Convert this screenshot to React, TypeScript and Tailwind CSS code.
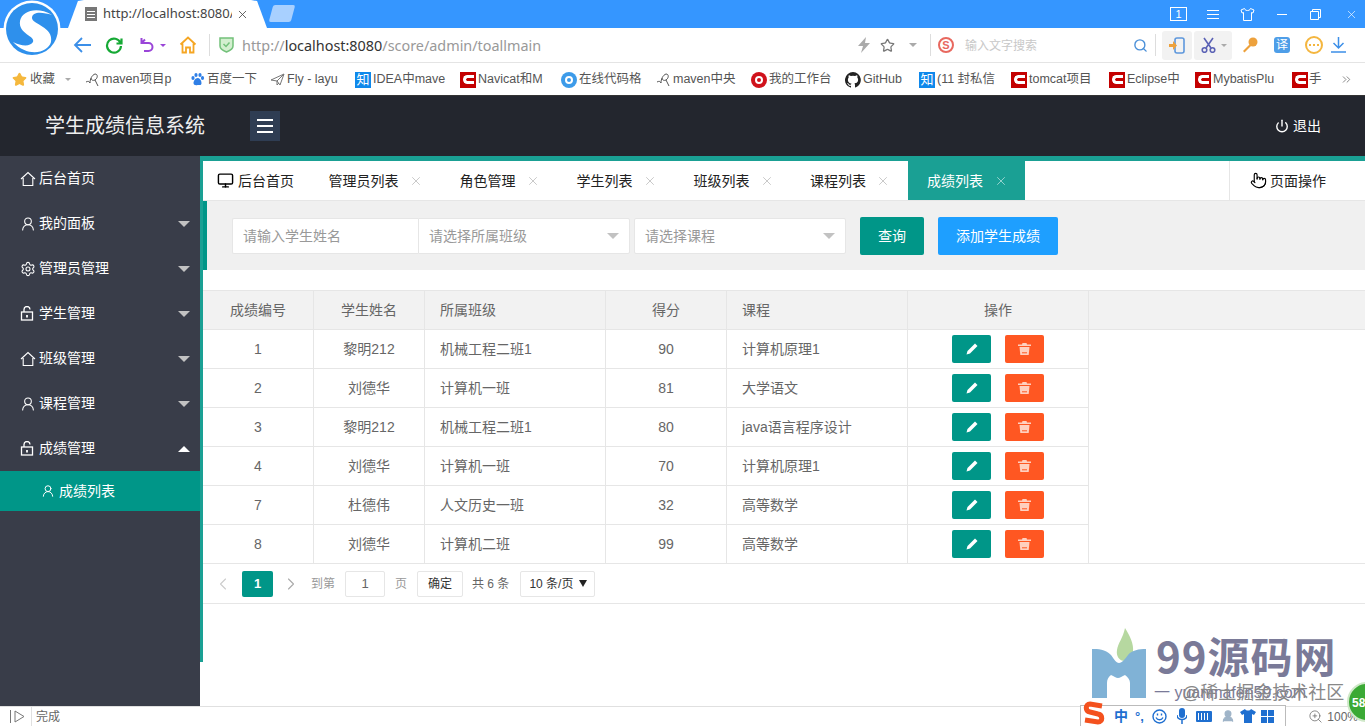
import {
  ChevronLeft,
  ChevronRight,
  ChevronsRight,
  Monitor,
  Pointer,
  Power,
  Search,
  Settings,
  Star,
  UserRound,
  X,
  ZoomIn,
} from "lucide-react";
import type { ReactNode } from "react";

const font = "font-['Liberation_Sans','Noto_Sans_CJK_SC',sans-serif]";

const HomeIcon = ({ size = 16 }: { size?: number }) => (
  <svg width={size} height={size} viewBox="0 0 16 16" fill="none" stroke="currentColor" strokeWidth="1.1">
    <path d="M1 8 8 1.500 15 8M3.200 7v7.500h9.600V7" />
  </svg>
);

const LockIcon = () => (
  <svg width="14" height="15" viewBox="0 0 14 15" fill="none" stroke="currentColor" strokeWidth="1.3">
    <rect x="1.500" y="6" width="11" height="8" />
    <path d="M4 6V3.500a3 3 0 0 1 6 0" />
    <path d="M7 9v2.500" strokeWidth="1.800" />
  </svg>
);

const TrashIcon = () => (
  <svg width="13" height="12" viewBox="0 0 13 12" fill="#ffd0bf">
    <path d="M4.500 0h4l.500 1.500H13v1.500H0V1.500h4z" />
    <path d="M1.500 4h10l-.800 8H2.300z" />
    <path d="M4 9.800h5" stroke="#ff5722" strokeWidth="1" />
  </svg>
);

const PencilIcon = () => (
  <svg width="12" height="12" viewBox="0 0 12 12" fill="white">
    <path d="M9 .5 11.500 3 4 10.500 0.500 11.500 1.500 8z" />
  </svg>
);

const Caret = ({ up = false, className = "" }: { up?: boolean; className?: string }) => (
  <span
    className={`block w-0 h-0 border-x-[6px] border-x-transparent ${
      up ? "border-b-[6px] border-b-white" : "border-t-[6px] border-t-[#c2c2c2]"
    } ${className}`}
  />
);

const RedC = () => (
  <span className="w-4 h-4 bg-[#c40000] flex items-center justify-center shrink-0">
    <span className="w-[11px] h-[9px] rounded-l-full border-[3px] border-r-0 border-white" />
  </span>
);

const Zhi = () => (
  <span className="w-4 h-4 bg-[#0f88eb] text-white text-[13px] leading-4 text-center shrink-0">知</span>
);

const MavenMark = () => (
  <svg width="15" height="15" viewBox="0 0 15 15" fill="none" stroke="#555" strokeWidth="1" className="shrink-0">
    <path d="M1 10c2-1 3-1 4 1 0-4 2-8 5-9 3 0 3 4 0 6-2 1-4 0-4-2M10 8l3 6" />
  </svg>
);

const bookmarks: { w: number; icon: ReactNode; label: string }[] = [
  { w: 105, icon: <MavenMark />, label: "maven项目p" },
  {
    w: 80,
    icon: (
      <svg width="15" height="15" viewBox="0 0 15 15" fill="#2f7fe6" className="shrink-0">
        <ellipse cx="3" cy="6" rx="1.600" ry="2" />
        <ellipse cx="6" cy="3" rx="1.600" ry="2" />
        <ellipse cx="10" cy="3" rx="1.600" ry="2" />
        <ellipse cx="12.500" cy="6" rx="1.600" ry="2" />
        <path d="M7.500 6c-2 0-4 3-4 5s2 2.500 4 2 4 1 4-2-2-5-4-5z" />
      </svg>
    ),
    label: "百度一下",
  },
  {
    w: 85,
    icon: (
      <svg width="15" height="15" viewBox="0 0 15 15" fill="none" stroke="#777" strokeWidth="1" className="shrink-0">
        <path d="M1 8 14 2 10 13 7 9zM7 9l7-7M7 9v4l2-2" />
      </svg>
    ),
    label: "Fly - layu",
  },
  { w: 105, icon: <Zhi />, label: "IDEA中mave" },
  { w: 101, icon: <RedC />, label: "Navicat和M" },
  {
    w: 95,
    icon: (
      <span className="w-4 h-4 rounded-full bg-[#3d9be9] flex items-center justify-center shrink-0">
        <span className="w-2 h-2 rounded-full border-2 border-white" />
      </span>
    ),
    label: "在线代码格",
  },
  { w: 95, icon: <MavenMark />, label: "maven中央" },
  {
    w: 94,
    icon: (
      <span className="w-4 h-4 rounded-full bg-[#d0121b] flex items-center justify-center shrink-0">
        <span className="w-2 h-2 rounded-full border-2 border-white" />
      </span>
    ),
    label: "我的工作台",
  },
  {
    w: 74,
    icon: (
      <svg width="16" height="16" viewBox="0 0 16 16" fill="#222" className="shrink-0">
        <path d="M8 0a8 8 0 0 0-2.500 15.600c.4.100.500-.200.500-.400v-1.400c-2.200.500-2.700-1-2.700-1-.4-.900-.900-1.200-.900-1.200-.700-.500.100-.500.100-.500.800.100 1.200.800 1.200.800.700 1.200 1.900.900 2.300.700.100-.500.300-.900.500-1.100-1.800-.200-3.600-.900-3.600-4 0-.900.300-1.600.800-2.100-.100-.200-.400-1 .100-2.100 0 0 .700-.200 2.200.800a7.500 7.500 0 0 1 4 0c1.500-1 2.200-.800 2.200-.800.400 1.100.200 1.900.100 2.100.500.600.800 1.300.800 2.100 0 3.100-1.900 3.700-3.700 3.900.3.300.600.800.600 1.500v2.200c0 .2.100.500.600.400A8 8 0 0 0 8 0z" />
      </svg>
    ),
    label: "GitHub",
  },
  { w: 92, icon: <Zhi />, label: "(11 封私信" },
  { w: 98, icon: <RedC />, label: "tomcat项目" },
  { w: 86, icon: <RedC />, label: "Eclipse中" },
  { w: 97, icon: <RedC />, label: "MybatisPlu" },
];

const menu = [
  { icon: <HomeIcon />, label: "后台首页", caret: false },
  { icon: <UserRound size={16} strokeWidth={1.6} />, label: "我的面板", caret: true },
  { icon: <Settings size={16} strokeWidth={1.6} />, label: "管理员管理", caret: true },
  { icon: <LockIcon />, label: "学生管理", caret: true },
  { icon: <HomeIcon />, label: "班级管理", caret: true },
  { icon: <UserRound size={16} strokeWidth={1.6} />, label: "课程管理", caret: true },
];

const tabs = [
  { label: "管理员列表", w: "w-[131px]" },
  { label: "角色管理", w: "w-[117px]" },
  { label: "学生列表", w: "w-[117px]" },
  { label: "班级列表", w: "w-[117px]" },
  { label: "课程列表", w: "w-[116px]" },
];

const rows = [
  ["1", "黎明212", "机械工程二班1", "90", "计算机原理1"],
  ["2", "刘德华", "计算机一班", "81", "大学语文"],
  ["3", "黎明212", "机械工程二班1", "80", "java语言程序设计"],
  ["4", "刘德华", "计算机一班", "70", "计算机原理1"],
  ["7", "杜德伟", "人文历史一班", "32", "高等数学"],
  ["8", "刘德华", "计算机二班", "99", "高等数学"],
];

const columns = "grid grid-cols-[111px_111px_181px_121px_181px_181px] w-[886px]";

const BrowserChrome = () => (
  <div className="shrink-0">
    <div className="h-7 bg-[#3596ff] flex items-end relative">
      <div className="ml-[68px] w-[199px] h-7 bg-white [clip-path:polygon(0_100%,5%_4%,8%_0,92%_0,95%_4%,100%_100%)] flex items-center pl-[17px] text-[13px] text-[#444] font-['Noto_Sans',sans-serif]">
        <span className="w-3 h-[14px] bg-[#777] mr-[6px] flex flex-col justify-center gap-[2px] px-[2px] shrink-0">
          <span className="h-px bg-white" />
          <span className="h-px bg-white" />
          <span className="h-px bg-white" />
        </span>
        <span className="w-[129px] overflow-hidden whitespace-nowrap">http://localhost:8080/s</span>
        <X size={13} className="ml-[4px]" strokeWidth={1.5} />
      </div>
      <span className="ml-[4px] mb-[6px] w-[22px] h-[17px] bg-[#a8d0ff] -skew-x-[15deg] rounded-[2px]" />
      <div className="ml-auto flex items-center text-white h-7">
        <span className="w-[17px] h-[14px] border border-white text-[11px] leading-[12px] text-center mr-5">1</span>
        <span className="w-3 flex flex-col gap-[3px] mr-[21px]">
          <span className="h-px bg-white" />
          <span className="h-px bg-white" />
          <span className="h-px bg-white" />
        </span>
        <svg width="15" height="13" viewBox="0 0 15 13" fill="none" stroke="white" className="mr-[22px]">
          <path d="M4.500.5 1 2l1 3 1.500-.500v8h8v-8L13 5l1-3L10.500.5c-.5 2-2.500 2-3 2s-2.500 0-3-2z" />
        </svg>
        <span className="w-[10px] h-px bg-white mr-[23px]" />
        <svg width="11" height="11" viewBox="0 0 11 11" fill="none" stroke="white" className="mr-6">
          <path d="M.5 2.500h8v8h-8zM2.500 2.500v-2h8v8h-2" />
        </svg>
        <X size={13} strokeWidth={1.2} className="mr-[7px]" />
      </div>
    </div>

    <div className="h-[34px] bg-white flex items-center relative">
      <svg width="20" height="18" viewBox="0 0 20 18" fill="none" stroke="#3c8fe8" strokeWidth="1.8" className="ml-[73px]">
        <path d="M18 9H2M9 2 2 9l7 7" />
      </svg>
      <svg width="18" height="18" viewBox="0 0 18 18" fill="none" stroke="#16a935" strokeWidth="2.200" className="ml-[12px]">
        <path d="M15.500 7A7 7 0 1 0 16 10M16.500 2.500V7.500H11.500" />
      </svg>
      <svg width="16" height="16" viewBox="0 0 16 16" fill="none" stroke="#9a45d8" strokeWidth="2" className="ml-[17px]">
        <path d="M1.500 1v5h7a4 4 0 0 1 0 8H4M1.500 6 5 2.500" />
      </svg>
      <span className="ml-1 w-0 h-0 border-x-[3px] border-x-transparent border-t-[3px] border-t-[#9a45d8]" />
      <svg width="18" height="18" viewBox="0 0 18 18" fill="none" stroke="#f5a623" strokeWidth="1.800" className="ml-[13px]">
        <path d="M1.500 8.500 9 1.500l7.500 7M3.500 7.500v9h3.500v-5h4v5h3.500v-9" />
      </svg>
      <span className="ml-3 w-px h-[22px] bg-[#ddd]" />
      <svg width="15" height="16" viewBox="0 0 15 16" fill="#d3efcf" stroke="#73c17a" strokeWidth="1.500" className="ml-[9px]">
        <path d="M1 1h13v8c0 3-4 5-6.500 6C5 14 1 12 1 9z" />
        <path d="M4.500 7 7 9.500 10.500 5.500" fill="none" />
      </svg>
      <span className="ml-2 mt-[1px] text-[14.400px] text-[#999] font-['Noto_Sans',sans-serif] w-[310px] whitespace-nowrap">
        http://<span className="text-[#333]">localhost:8080</span>/score/admin/toallmain
      </span>
      <svg width="12" height="16" viewBox="0 0 12 16" fill="#aaa" className="ml-[306px]">
        <path d="M8 0 0 9h5l-2 7 9-10H7z" />
      </svg>
      <Star size={15} className="ml-[10px] text-[#777]" strokeWidth={2} />
      <span className="ml-[14px] w-0 h-0 border-x-[4px] border-x-transparent border-t-[4px] border-t-[#aaa]" />
      <span className="ml-[13px] w-px h-[22px] bg-[#ddd]" />
      <span className="ml-[7px] w-4 h-4 rounded-full border-2 border-[#e8685f] text-[#e8685f] text-[11px] font-bold leading-3 text-center">
        S
      </span>
      <span className="ml-[11px] mt-[1px] text-[12px] text-[#c8c8c8] w-[169px]">输入文字搜索</span>
      <Search size={15} className="text-[#4a8fd8] -ml-[1px]" strokeWidth={2.2} />
      <span className="ml-[7px] w-px h-[22px] bg-[#ddd]" />
      <span className="ml-[6px] w-[30px] h-[29px] bg-[#f2f2f2] rounded-[3px] flex items-center justify-center">
        <svg width="18" height="17" viewBox="0 0 18 17" fill="none">
          <rect x="7" y="1" width="9" height="15" rx="2" stroke="#5d97dc" strokeWidth="1.600" />
          <path d="M1 7h4V4l4 4.500L5 13v-3H1z" fill="#eda13c" />
        </svg>
      </span>
      <span className="ml-[2px] w-[38px] h-[29px] bg-[#f2f2f2] rounded-[3px] flex items-center pl-[7px]">
        <svg width="15" height="16" viewBox="0 0 15 16" fill="none" stroke="#5b62b5" strokeWidth="1.600">
          <path d="M3 1l7 10M12 1 5 11" />
          <circle cx="3.500" cy="13" r="2.300" />
          <circle cx="11.500" cy="13" r="2.300" />
        </svg>
        <span className="ml-[5px] w-0 h-0 border-x-[3px] border-x-transparent border-t-[3px] border-t-[#aaa]" />
      </span>
      <svg width="16" height="16" viewBox="0 0 16 16" fill="#eda13c" className="ml-[10px]">
        <circle cx="11" cy="5" r="4.500" />
        <path d="M8 7 1 14l1.500 1.500L9 9z" />
      </svg>
      <span className="ml-4 w-4 h-4 bg-[#4e9ee8] rounded-[3px] text-white text-[12px] leading-4 text-center">译</span>
      <span className="ml-[15px] w-[18px] h-[18px] rounded-full border-2 border-[#f4b63f] flex items-center justify-center gap-[2px]">
        <span className="w-[2px] h-[2px] bg-[#f4b63f]" />
        <span className="w-[2px] h-[2px] bg-[#f4b63f]" />
        <span className="w-[2px] h-[2px] bg-[#f4b63f]" />
      </span>
      <svg width="15" height="16" viewBox="0 0 15 16" fill="none" stroke="#3c8fe8" strokeWidth="1.500" className="ml-[8px]">
        <path d="M7.500 0v11M2.500 6l5 5 5-5M0 15h15" />
      </svg>
    </div>

    <div className="h-[33px] bg-white border-t border-[#e4e4e4] flex items-center pl-[12px] pt-[1px] text-[12.500px] text-[#555] whitespace-nowrap overflow-hidden">
      <div className="w-[73px] flex items-center">
        <Star size={15} className="text-[#f5b83d] shrink-0" fill="#f5b83d" />
        <span className="ml-[3px]">收藏</span>
        <span className="ml-[10px] w-0 h-0 border-x-[3px] border-x-transparent border-t-[3px] border-t-[#aaa]" />
      </div>
      {bookmarks.map((b) => (
        <div key={b.label} className="flex items-center gap-[1px] shrink-0" style={{ width: b.w }}>
          {b.icon}
          <span className="ml-[1px]">{b.label}</span>
        </div>
      ))}
      <div className="flex items-center w-[48px] shrink-0">
        <RedC />
        <span className="ml-[1px] w-[14px] overflow-hidden">手</span>
      </div>
      <ChevronsRight size={13} strokeWidth={1.4} className="text-[#666]" />
    </div>
    <div className="h-px bg-[#333]" />
  </div>
);

const Header = () => (
  <header className="h-[60px] shrink-0 bg-[#23262e] flex items-center pl-[45px] pr-[44px] text-white">
    <span className="text-[20px] w-[205px] text-[#eee]">学生成绩信息系统</span>
    <span className="w-[30px] h-[30px] bg-[#2f3d53] flex flex-col justify-center gap-[4px] px-[7px]">
      <span className="h-[2px] bg-white" />
      <span className="h-[2px] bg-white" />
      <span className="h-[2px] bg-white" />
    </span>
    <span className="ml-auto flex items-center gap-[4px] text-[14px]">
      <Power size={14} strokeWidth={2.4} />
      退出
    </span>
  </header>
);

const Sidebar = () => (
  <aside className="w-[200px] shrink-0 bg-[#393d49] text-[14px] text-white">
    {menu.map((item) => (
      <div key={item.label} className="h-[45px] flex items-center pl-[20px] pr-[10px]">
        <span className="w-[19px] flex">{item.icon}</span>
        <span>{item.label}</span>
        {item.caret && <Caret className="ml-auto mt-[1px]" />}
      </div>
    ))}
    <div className="h-[45px] flex items-center pl-[20px] pr-[10px]">
      <span className="w-[19px] flex">
        <LockIcon />
      </span>
      <span>成绩管理</span>
      <Caret up className="ml-auto" />
    </div>
    <div className="h-10 bg-[#009688] flex items-center pl-[41px]">
      <UserRound size={14} strokeWidth={1.7} className="mr-[4px]" />
      成绩列表
    </div>
  </aside>
);

const Tabs = () => (
  <div className="h-10 flex bg-white text-[14px] text-[#222] border-b border-[#e6e6e6]">
    <div className="w-[107px] flex items-center pl-[14px]">
      <Monitor size={17} strokeWidth={2} className="mr-[4px] text-black" />
      <span className="pt-[1px]">后台首页</span>
    </div>
    {tabs.map((t) => (
      <div key={t.label} className={`${t.w} flex items-center justify-center gap-[10px]`}>
        <span className="pt-[1px]">{t.label}</span>
        <X size={14} strokeWidth={1.1} className="text-[#aaa]" />
      </div>
    ))}
    <div className="w-[117px] bg-[#1aa094] text-white flex items-center justify-center gap-[11px] pl-[2px]">
      <span className="pt-[1px]">成绩列表</span>
      <X size={14} strokeWidth={1.1} className="text-[#d6eeec]" />
    </div>
    <div className="ml-auto w-[136px] border-l border-[#e6e6e6] flex items-center pl-[20px]">
      <Pointer size={17} strokeWidth={1.6} className="mr-[3px] text-black" />
      <span className="pt-[1px]">页面操作</span>
    </div>
  </div>
);

const Filters = () => (
  <div className="h-[69px] bg-[#f0f0f0] border-l-4 border-[#009688] flex items-center pl-[25px] text-[14px] text-[#999]">
    <div className="w-[186px] h-9 bg-white rounded-l-[2px] flex items-center pl-[10px] pt-[1px] border border-r-0 border-[#e6e6e6]">
      请输入学生姓名
    </div>
    <div className="w-[212px] h-9 bg-white rounded-r-[2px] flex items-center px-[10px] pt-[1px] border border-[#e6e6e6]">
      请选择所属班级
      <Caret className="ml-auto" />
    </div>
    <div className="ml-[4px] w-[212px] h-9 bg-white rounded-[2px] flex items-center px-[10px] pt-[1px] border border-[#e6e6e6]">
      请选择课程
      <Caret className="ml-auto" />
    </div>
    <button className="ml-[14px] w-[64px] h-[38px] pt-[1px] rounded-[2px] bg-[#009688] text-white">查询</button>
    <button className="ml-[14px] w-[120px] h-[38px] pt-[1px] rounded-[2px] bg-[#1e9fff] text-white">添加学生成绩</button>
  </div>
);

const Table = () => (
  <div className="mt-5 text-[14px] text-[#666]">
    <div className="h-10 bg-[#f2f2f2] border-y border-[#e6e6e6]">
      <div className={`${columns} h-full`}>
        {["成绩编号", "学生姓名", "所属班级", "得分", "课程", "操作"].map((h, i) => (
          <div
            key={h}
            className={`flex items-center border-r border-[#e6e6e6] ${
              i === 2 || i === 4 ? "pl-[15px]" : "justify-center"
            }`}
          >
            {h}
          </div>
        ))}
      </div>
    </div>
    {rows.map((r, idx) => (
      <div
        key={r[0]}
        className={`${columns} ${idx === rows.length - 1 ? "h-[38px]" : "h-[39px] border-b border-[#e6e6e6]"}`}
      >
        {r.map((c, i) => (
          <div
            key={i}
            className={`flex items-center border-r border-[#e6e6e6] ${
              i === 2 || i === 4 ? "pl-[15px]" : "justify-center"
            }`}
          >
            {c}
          </div>
        ))}
        <div className="flex items-center justify-center gap-[14px] border-r border-[#e6e6e6]">
          <span className="w-[39px] h-7 bg-[#009688] rounded-[2px] flex items-center justify-center">
            <PencilIcon />
          </span>
          <span className="w-[39px] h-7 bg-[#ff5722] rounded-[2px] flex items-center justify-center">
            <TrashIcon />
          </span>
        </div>
      </div>
    ))}
  </div>
);

const Pagination = () => (
  <div className="h-[41px] border-y border-[#e6e6e6] flex items-center pl-[10px] text-[12px] text-[#999]">
    <ChevronLeft size={20} strokeWidth={1.300} className="text-[#ccc]" />
    <span className="ml-[9px] w-[31px] h-[26px] bg-[#009688] rounded-[2px] text-white font-bold text-[13px] flex items-center justify-center">
      1
    </span>
    <ChevronRight size={20} strokeWidth={1.300} className="ml-[8px] text-[#aaa]" />
    <span className="ml-[10px]">到第</span>
    <span className="ml-[10px] w-10 h-[26px] border border-[#e6e6e6] rounded-[2px] text-[#666] text-[13px] flex items-center justify-center">
      1
    </span>
    <span className="ml-[10px]">页</span>
    <span className="ml-[10px] w-[46px] h-[26px] border border-[#e6e6e6] rounded-[2px] text-[#333] flex items-center justify-center">
      确定
    </span>
    <span className="ml-[9px] text-[#666]">共 6 条</span>
    <span className="ml-[11px] w-[75px] h-[26px] border border-[#e6e6e6] rounded-[2px] text-[#333] flex items-center pl-2">
      10 条/页
      <span className="ml-auto mr-[7px] w-0 h-0 border-x-[4px] border-x-transparent border-t-[7px] border-t-[#222]" />
    </span>
  </div>
);

const Overlays = () => (
  <>
    {/* browser logo */}
    <svg width="58" height="58" viewBox="0 0 58 58" className="absolute left-[3px] top-0">
      <circle cx="29" cy="29" r="28.500" fill="white" />
      <circle cx="29" cy="29" r="26" fill="#2e90ec" />
      <path
        d="M10 42c8 4 17 5 20 0 3-6-15-8-13-21 2-10 17-15 32-6-9-3-20-4-20 3 0 6 22 9 19 24-3 11-23 16-38 0z"
        fill="white"
      />
    </svg>

    {/* watermark */}
    <div className="absolute left-[1092px] top-[628px] w-[273px] h-[98px] pointer-events-none">
      <svg width="54" height="70" viewBox="0 0 54 70">
        <path d="M33 0c5 8 9 16 8 24-1 6-5 9-8 9-6 0-9-5-8-11 1-7 6-12 8-22z" fill="#b6d8a0" />
        <path d="M0 21c6 0 13 0 19 6 3 4 5 8 8 8s6-4 9-8c4-5 11-6 18-6v49H38V55c0-3-2-6-5-8-3 1-5 3-7 3-2 0-4-2-7-3-3 2-4 5-4 8v15H0z" fill="#80b2d6" />
      </svg>
      <span className="absolute left-[64px] top-[3px] text-[42px] leading-[48px] font-bold text-[#7a7a98] font-['Noto_Sans_CJK_SC',sans-serif] whitespace-nowrap tracking-[1px]">
        99源码网
      </span>
      <span className="absolute left-[62px] top-[55px] text-[16px] leading-5 text-[#7a7a98] whitespace-nowrap">
        一 yuanmafen59.com
      </span>
      <span className="absolute left-[90px] top-[55px] text-[18px] leading-5 text-[#888] whitespace-nowrap">
        @稀土掘金技术社区
      </span>
    </div>

    {/* IME bar */}
    <div className="absolute left-[1080px] top-[705px] w-[206px] h-[21px] bg-white border border-b-0 border-[#bbb] flex items-center pl-[1px] text-[#1f6fd0]">
      <svg width="24" height="24" viewBox="0 0 24 24" fill="none" stroke="#f4511e" strokeWidth="5" className="-mt-[6px]">
        <path d="M20 5 8 3C3 3 3 10 8 11l8 2c5 1 5 8 0 8L3 19" />
      </svg>
      <span className="ml-[8px] text-[14px] font-bold">中</span>
      <span className="ml-[7px] text-[13px] font-bold leading-none">°,</span>
      <svg width="15" height="15" viewBox="0 0 15 15" fill="none" stroke="#1f6fd0" strokeWidth="1.400" className="ml-[8px]">
        <circle cx="7.500" cy="7.500" r="6.500" />
        <path d="M4 8.500c1.500 3 5.500 3 7 0M5.500 4.500v2M9.500 4.500v2" />
      </svg>
      <svg width="10" height="16" viewBox="0 0 10 16" fill="#1f6fd0" className="ml-[10px]">
        <rect x="2" y="0" width="6" height="10" rx="3" />
        <path d="M0 7c0 6 10 6 10 0M5 12v4" fill="none" stroke="#1f6fd0" strokeWidth="1.500" />
      </svg>
      <span className="ml-[9px] w-[16px] h-[11px] bg-[#1f6fd0] rounded-[1px] border-2 border-[#1f6fd0] [background-image:repeating-linear-gradient(90deg,white_0,white_1px,transparent_1px,transparent_3px)]" />
      <UserRound size={14} className="ml-[9px] text-[#9fb4c8]" fill="#9fb4c8" />
      <svg width="16" height="14" viewBox="0 0 16 14" fill="#1f6fd0" className="ml-[5px]">
        <path d="M5 0 0 3l2 3 2-1v9h8V5l2 1 2-3-5-3c-1 2-5 2-6 0z" />
      </svg>
      <span className="ml-[5px] grid grid-cols-2 gap-[1px]">
        <span className="w-[6px] h-[6px] bg-[#1f6fd0]" />
        <span className="w-[6px] h-[6px] bg-[#1f6fd0]" />
        <span className="w-[6px] h-[6px] bg-[#1f6fd0]" />
        <span className="w-[6px] h-[6px] bg-[#1f6fd0]" />
      </span>
    </div>

    {/* speed ball */}
    <div className="absolute left-[1347px] top-[682px] w-[40px] h-[40px] rounded-full bg-[#3ba935] border-2 border-[#cfe8c8] text-white text-[12px] font-bold leading-[38px] pl-[3px]">
      58
    </div>
  </>
);

export default function App() {
  return (
    <div className={`${font} relative h-screen w-full flex flex-col overflow-hidden bg-white`}>
      <BrowserChrome />
      <Header />
      <div className="flex-1 flex min-h-0">
        <Sidebar />
        <main className="flex-1 min-w-0">
          <div className="h-[506px] border-l-3 border-t-[5px] border-[#1aa094]">
            <Tabs />
            <Filters />
            <Table />
            <Pagination />
          </div>
        </main>
      </div>
      <footer className="h-5 shrink-0 bg-white border-t border-[#e0e0e0] flex items-center text-[12px] text-[#666]">
        <span className="ml-[10px] w-px h-[13px] bg-[#777]" />
        <svg width="11" height="13" viewBox="0 0 11 13" fill="none" stroke="#777" className="ml-[3px]">
          <path d="M1 1v11l9-5.500z" />
        </svg>
        <span className="ml-[6px] w-px h-5 bg-[#e0e0e0]" />
        <span className="ml-[4px]">完成</span>
        <span className="ml-auto mr-[7px] flex items-center gap-[4px]">
          <ZoomIn size={15} strokeWidth={1.200} />
          100%
        </span>
      </footer>
      <Overlays />
    </div>
  );
}
